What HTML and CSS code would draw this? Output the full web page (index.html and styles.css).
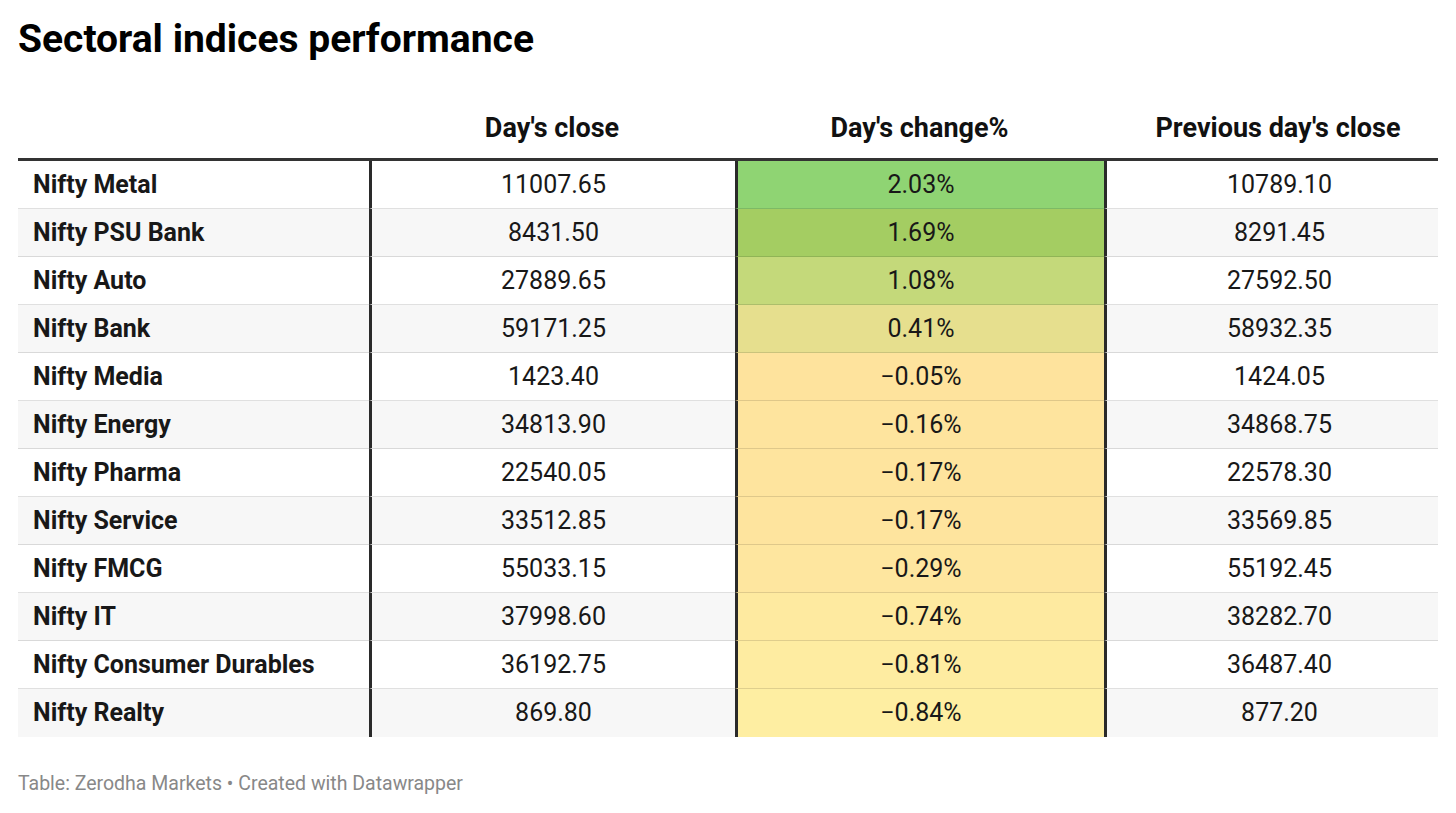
FILE: index.html
```html
<!DOCTYPE html>
<html lang="en">
<head>
<meta charset="utf-8">
<title>Sectoral indices performance</title>
<link rel="stylesheet" href="styles.css">
</head>
<body>
<div class="chart">
  <h1 class="title">Sectoral indices performance</h1>
  <table class="tbl">
    <colgroup>
      <col class="c1"><col class="c2"><col class="c3"><col class="c4">
    </colgroup>
    <thead>
      <tr>
        <th class="name"></th>
        <th>Day's close</th>
        <th>Day's change%</th>
        <th class="last">Previous day's close</th>
      </tr>
    </thead>
    <tbody>
      <tr><td class="name">Nifty Metal</td><td class="sep">11007.65</td><td class="sep chg" style="background:#8fd473">2.03%</td><td class="sep last">10789.10</td></tr>
      <tr><td class="name">Nifty PSU Bank</td><td class="sep">8431.50</td><td class="sep chg" style="background:#a4cd62">1.69%</td><td class="sep last">8291.45</td></tr>
      <tr><td class="name">Nifty Auto</td><td class="sep">27889.65</td><td class="sep chg" style="background:#c4d97a">1.08%</td><td class="sep last">27592.50</td></tr>
      <tr><td class="name">Nifty Bank</td><td class="sep">59171.25</td><td class="sep chg" style="background:#e6df8e">0.41%</td><td class="sep last">58932.35</td></tr>
      <tr><td class="name">Nifty Media</td><td class="sep">1423.40</td><td class="sep chg" style="background:#fee39d">−0.05%</td><td class="sep last">1424.05</td></tr>
      <tr><td class="name">Nifty Energy</td><td class="sep">34813.90</td><td class="sep chg" style="background:#fee49e">−0.16%</td><td class="sep last">34868.75</td></tr>
      <tr><td class="name">Nifty Pharma</td><td class="sep">22540.05</td><td class="sep chg" style="background:#fee49e">−0.17%</td><td class="sep last">22578.30</td></tr>
      <tr><td class="name">Nifty Service</td><td class="sep">33512.85</td><td class="sep chg" style="background:#fee49e">−0.17%</td><td class="sep last">33569.85</td></tr>
      <tr><td class="name">Nifty FMCG</td><td class="sep">55033.15</td><td class="sep chg" style="background:#fee69f">−0.29%</td><td class="sep last">55192.45</td></tr>
      <tr><td class="name">Nifty IT</td><td class="sep">37998.60</td><td class="sep chg" style="background:#feeaa0">−0.74%</td><td class="sep last">38282.70</td></tr>
      <tr><td class="name">Nifty Consumer Durables</td><td class="sep">36192.75</td><td class="sep chg" style="background:#feeca1">−0.81%</td><td class="sep last">36487.40</td></tr>
      <tr><td class="name">Nifty Realty</td><td class="sep">869.80</td><td class="sep chg" style="background:#feeea2">−0.84%</td><td class="sep last">877.20</td></tr>
    </tbody>
  </table>
  <p class="footer">Table: Zerodha Markets • Created with Datawrapper</p>
</div>
</body>
</html>
```
FILE: styles.css
```css
html, body {
  margin: 0;
  padding: 0;
  background: #ffffff;
}
body {
  font-family: Roboto, "Liberation Sans", sans-serif;
  color: #181818;
}
.chart {
  padding: 16px 18px 0 18px;
}
.title {
  margin: 0;
  font-size: 39px;
  line-height: 46px;
  font-weight: 700;
  color: #000;
}
.tbl {
  margin-top: 50px;
  width: 1420px;
  table-layout: fixed;
  border-collapse: separate;
  border-spacing: 0;
  font-size: 25px;
}
.c1 { width: 351px; }
.c2 { width: 366px; }
.c3 { width: 369px; }
.c4 { width: 334px; }
.tbl th {
  font-size: 27px;
  line-height: 32px;
  font-weight: 700;
  text-align: center;
  padding: 0 0 14px 0;
  vertical-align: bottom;
  border-bottom: 3px solid #333;
  color: #111;
}
.tbl td {
  height: 47px;
  padding: 0;
  line-height: 30px;
  text-align: center;
  vertical-align: middle;
  border-bottom: 1px solid rgba(0,0,0,0.12);
}
.tbl .last { padding-left: 14px; }
.tbl tbody tr:nth-child(even) td { background: #f7f7f7; }
.tbl tbody tr:last-child td { border-bottom: none; height: 48px; }
.tbl td.name {
  text-align: left;
  padding-left: 15px;
  font-weight: 700;
  white-space: nowrap;
}
.tbl td.sep {
  border-left: 3px solid #2a2a2a;
}
.footer {
  margin: 35px 0 0 0;
  font-size: 19.5px;
  color: #888;
}
```
